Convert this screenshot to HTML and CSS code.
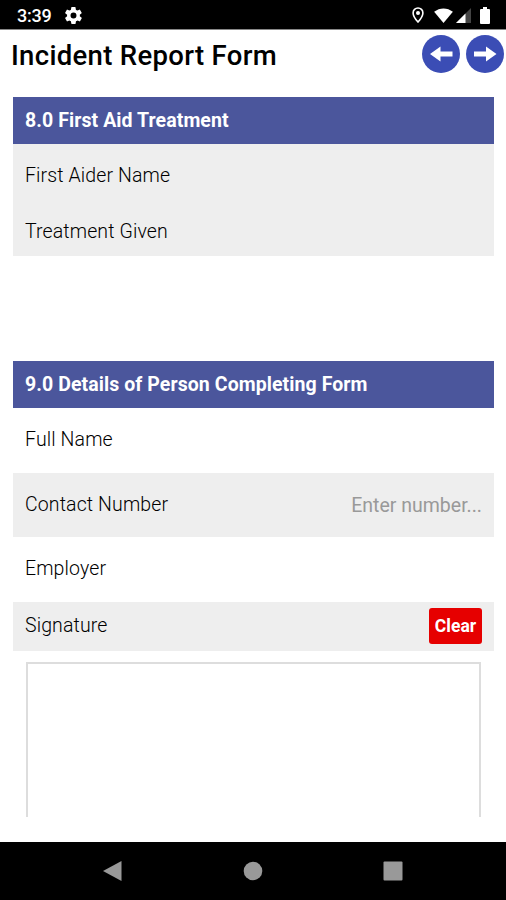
FILE: index.html
```html
<!DOCTYPE html>
<html lang="en">
<head>
<meta charset="utf-8">
<title>Incident Report Form</title>
<link rel="stylesheet" href="styles.css">
</head>
<body>
<div class="screen">
  <div class="status-bar">
    <span class="clock">3:39</span>
    <svg class="gear" viewBox="2 2 20 20"><path d="M19.4 13c0-.3.1-.6.1-1s0-.7-.1-1l2.1-1.6c.2-.2.2-.4.1-.6l-2-3.5c-.1-.2-.4-.3-.6-.2l-2.500 1c-.5-.4-1.100-.7-1.700-1l-.4-2.600c0-.2-.2-.5-.5-.5h-4c-.3 0-.5.3-.5.5L9 5.100c-.6.300-1.200.600-1.700 1l-2.500-1c-.2-.1-.5 0-.6.200l-2 3.500c-.1.200-.1.400.1.600L4.500 11c0 .3-.1.600-.1 1s0 .7.100 1l-2.200 1.600c-.2.200-.2.400-.1.600l2 3.500c.1.200.4.300.6.200l2.500-1c.5.400 1.100.700 1.700 1l.4 2.600c0 .2.300.5.600.5h4c.3 0 .5-.3.500-.5l.4-2.600c.6-.3 1.200-.6 1.700-1l2.500 1c.2.100.5 0 .6-.2l2-3.500c.1-.2.100-.4-.1-.6zM12 15.500a3.500 3.500 0 1 1 0-7 3.500 3.500 0 0 1 0 7z"/></svg>
    <div class="indicators">
      <svg class="pin" viewBox="0 0 12 16"><path d="M6 1a4.900 4.900 0 0 0-4.900 4.900C1.100 9.600 6 15 6 15s4.900-5.400 4.900-9.100A4.900 4.900 0 0 0 6 1z"/><circle cx="6" cy="6" r="2"/></svg>
      <svg class="wifi" viewBox="0 0 20 16"><path d="M0 4C6-.8 14-.8 20 4L10 16z"/></svg>
      <svg class="signal" viewBox="0 0 15 15"><path class="dim" d="M15 0v15H0z"/><path d="M9.500 5.500V15H0z"/></svg>
      <svg class="battery" viewBox="0 0 10 17"><path d="M3 0h4v2h2q1 0 1 1v13q0 1-1 1H1q-1 0-1-1V3q0-1 1-1h2z"/></svg>
    </div>
  </div>
  <header class="title-bar">
    <h1>Incident Report Form</h1>
    <button class="round" aria-label="Previous"><svg viewBox="0 0 38 38"><path d="M8 19l10.500-7.500v5H30.500v5H18.500v5z"/></svg></button>
    <button class="round" aria-label="Next"><svg viewBox="0 0 38 38"><path d="M30.500 19L20 11.500v5H8v5h12v5z"/></svg></button>
  </header>
  <main class="form">
    <section class="first-aid">
      <h2>8.0 First Aid Treatment</h2>
      <div class="row short shaded"><label>First Aider Name</label></div>
      <div class="row short shaded"><label>Treatment Given</label></div>
    </section>
    <section>
      <h2>9.0 Details of Person Completing Form</h2>
      <div class="row"><label>Full Name</label></div>
      <div class="row shaded"><label>Contact Number</label><span class="hint">Enter number...</span></div>
      <div class="row"><label>Employer</label></div>
      <div class="row sign shaded"><label>Signature</label><button class="clear">Clear</button></div>
      <div class="pad"></div>
    </section>
  </main>
  <nav class="nav-bar">
    <svg viewBox="0 0 20 20"><path d="M0 10L18.500 0v20z"/></svg>
    <svg viewBox="0 0 20 20"><circle cx="10" cy="10" r="9.300"/></svg>
    <svg viewBox="0 0 20 20"><rect x=".5" y=".5" width="19" height="19" rx="1"/></svg>
  </nav>
</div>
</body>
</html>
```
FILE: styles.css
```css
* { box-sizing: border-box; }
body { margin: 0; background: #fff; color: #111; font-family: Roboto, sans-serif; }
h1, h2 { margin: 0; }
button { border: 0; padding: 0; font-family: inherit; }
svg { display: block; }
.screen { width: 506px; height: 900px; display: flex; flex-direction: column; overflow: hidden; }

.status-bar { height: 30px; flex: none; display: flex; align-items: center; padding: 1px 16px 0 17px; background: #000; border-bottom: 1px solid #888; color: #fff; }
.clock { width: 48px; font-size: 18px; font-weight: 500; line-height: 18px; padding-top: 1px; letter-spacing: -0.2px; }
.status-bar svg { fill: #fff; }
.gear { width: 17px; height: 17px; }
.indicators { margin-left: auto; display: flex; align-items: center; }
.status-bar .pin { width: 12px; height: 16px; margin-right: 10px; fill: none; stroke: #fff; stroke-width: 1.6; }
.pin circle { fill: #fff; stroke: none; }
.wifi { width: 19px; height: 15px; margin-right: 3px; }
.signal { width: 15px; height: 15px; margin-right: 9px; }
.status-bar .dim { fill: #444; }
.battery { width: 10px; height: 17px; }

.title-bar { height: 67px; flex: none; display: flex; align-items: flex-start; gap: 6px; padding: 5px 2px 0 11px; }
h1 { flex: 1; font-size: 27.5px; line-height: 42px; font-weight: 500; letter-spacing: 0.32px; color: #000; white-space: nowrap; }
.round { width: 38px; height: 38px; border-radius: 50%; background: #3b4db5; }
.round svg { fill: #fff; width: 38px; height: 38px; }

.form { flex: 1; padding: 0 12px 0 13px; }
.first-aid { height: 264px; }
h2 { height: 47px; padding: 0 12px; background: #4b569c; color: #fff; font-size: 19.5px; line-height: 47px; font-weight: 700; letter-spacing: 0.08px; white-space: nowrap; }
.row { height: 64.5px; padding: 0 12px; display: flex; align-items: center; justify-content: space-between; font-size: 19.5px; line-height: 24px; }
.row.short { height: 56px; padding-top: 8px; }
.row.sign { height: 49px; }
.shaded { background: #eee; }
label { font-weight: 300; letter-spacing: 0.12px; color: #000; }
.hint { color: #999; padding-top: 2px; }
.clear { width: 53px; height: 36px; border-radius: 3px; background: #e60000; color: #fff; font-size: 17.5px; font-weight: 700; }
.pad { height: 155px; margin: 11px 13px 0; border: 2px solid #ddd; border-bottom: 0; }

.nav-bar { height: 58px; flex: none; display: flex; justify-content: center; gap: 120px; align-items: center; background: #000; }
.nav-bar svg { width: 20px; height: 20px; fill: #999; }
```
